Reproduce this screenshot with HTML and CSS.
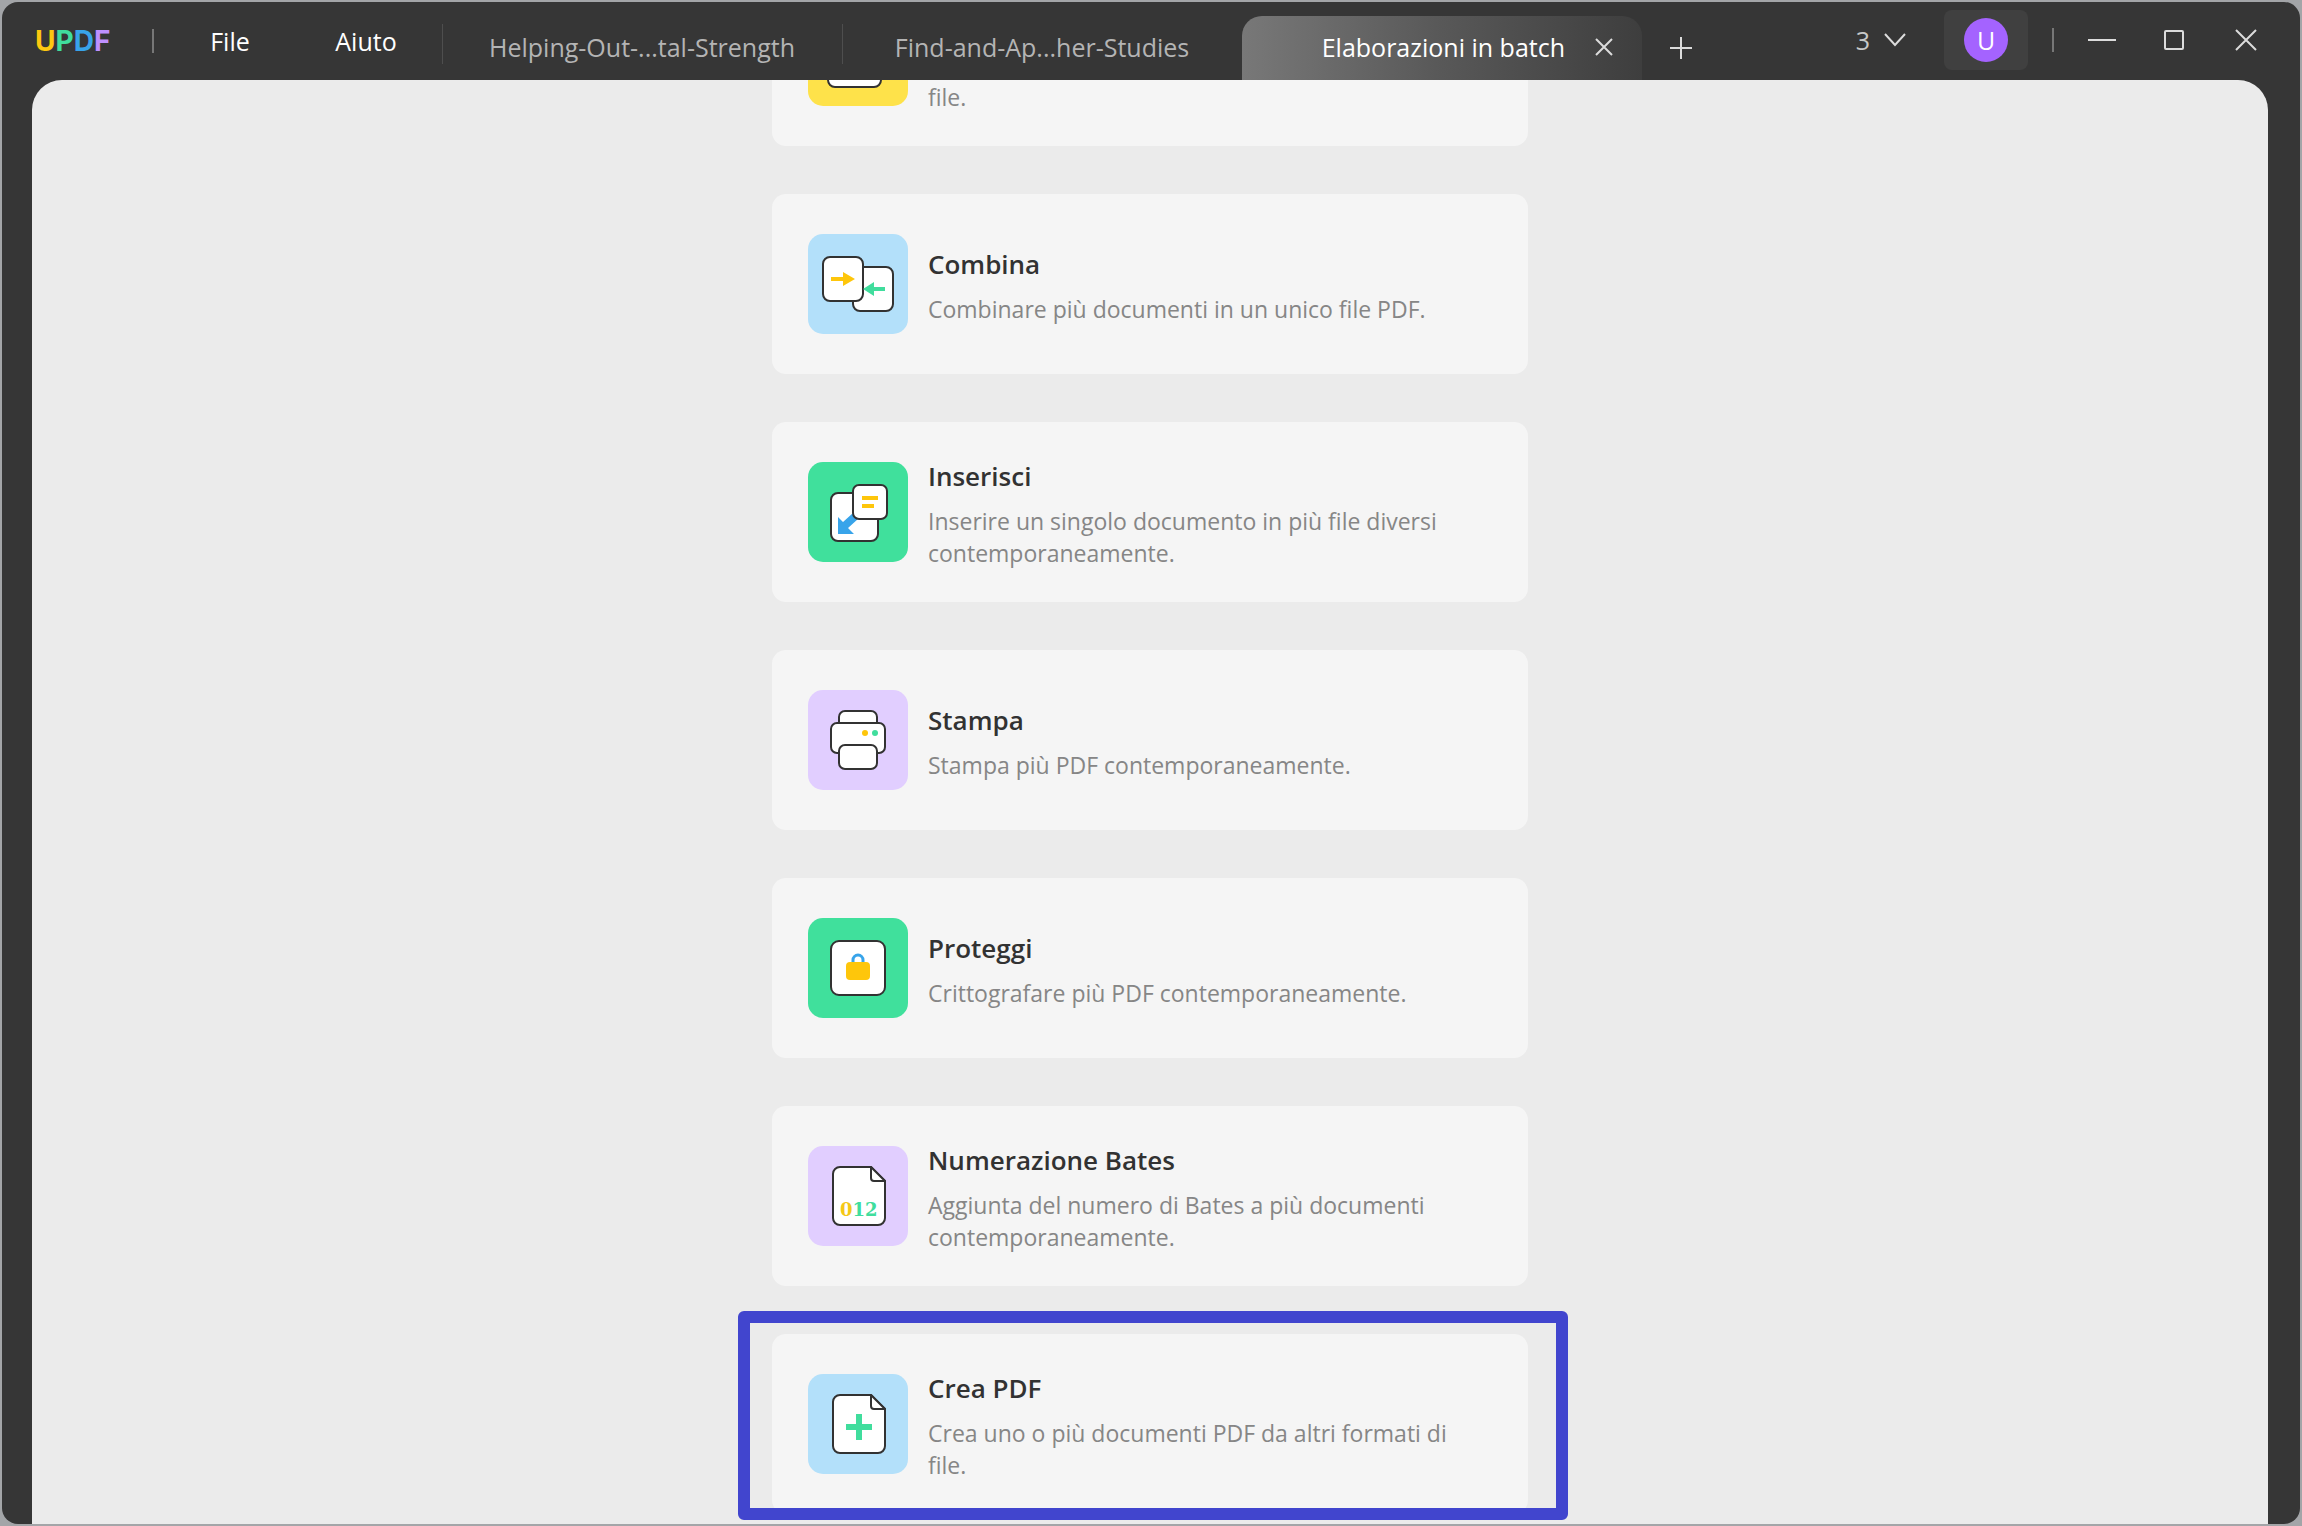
FILE: index.html
```html
<!DOCTYPE html>
<html lang="it">
<head>
<meta charset="utf-8">
<title>UPDF</title>
<link rel="stylesheet" href="styles.css">
</head>
<body>
<div class="window">
  <header class="titlebar">
    <div class="logo"><span class="logo-u">U</span><span class="logo-p">P</span><span class="logo-d">D</span><span class="logo-f">F</span></div>
    <span class="divider"></span>
    <nav class="menu">
      <button class="menu-item" type="button">File</button>
      <button class="menu-item" type="button">Aiuto</button>
    </nav>
    <div class="tabs">
      <button class="tab" type="button">Helping-Out-...tal-Strength</button>
      <button class="tab" type="button">Find-and-Ap...her-Studies</button>
      <div class="tab tab-active">
        <button class="tab-label" type="button">Elaborazioni in batch</button>
        <button class="tab-close" type="button" aria-label="Chiudi">
          <svg width="18" height="18" viewBox="0 0 18 18"><path class="glyph" d="M1 1l16 16M17 1L1 17"/></svg>
        </button>
      </div>
      <button class="tab-add" type="button" aria-label="Nuova scheda">
        <svg width="22" height="22" viewBox="0 0 22 22"><path class="glyph" d="M0 11h22M11 0v22"/></svg>
      </button>
    </div>
    <div class="controls">
      <button class="tab-count" type="button">3
        <svg width="22" height="14" viewBox="0 0 22 14"><path class="glyph" d="M1 1l10 11L21 1"/></svg>
      </button>
      <button class="account" type="button"><span class="avatar">U</span></button>
      <span class="divider"></span>
      <div class="window-buttons">
        <button class="window-button" type="button" aria-label="Riduci">
          <svg width="28" height="22" viewBox="0 0 28 22"><path class="glyph" d="M0 11h28"/></svg>
        </button>
        <button class="window-button" type="button" aria-label="Ingrandisci">
          <svg width="22" height="22" viewBox="0 0 22 22"><rect class="glyph" x="2" y="2" width="18" height="18" rx="1"/></svg>
        </button>
        <button class="window-button" type="button" aria-label="Chiudi finestra">
          <svg width="22" height="22" viewBox="0 0 22 22"><path class="glyph" d="M1 1l20 20M21 1L1 21"/></svg>
        </button>
      </div>
    </div>
  </header>

  <main class="panel">
    <div class="tools">
      <a class="card card-cut" href="#">
        <svg class="icon-cut" width="100" height="26" viewBox="0 74 100 26">
          <rect class="yellow" y="0" width="100" height="100" rx="15"/>
          <rect class="sheet" x="20" y="40" width="53" height="41" rx="7"/>
        </svg>
        <div class="text"><p>file.</p></div>
      </a>

      <a class="card" href="#">
        <svg class="icon" viewBox="0 0 100 100">
          <rect class="blue" width="100" height="100" rx="15"/>
          <rect class="sheet" x="45" y="33" width="40" height="44" rx="7"/>
          <rect class="sheet" x="15" y="23" width="40" height="44" rx="7"/>
          <path fill="#fec60b" d="M23 43h12v-5l12 7-12 7v-5H23z"/>
          <path fill="#40dd9d" d="M77 53H66v-5l-11 7 11 7v-5h11z"/>
        </svg>
        <div class="text"><h2>Combina</h2><p>Combinare più documenti in un unico file PDF.</p></div>
      </a>

      <a class="card" href="#">
        <svg class="icon" viewBox="0 0 100 100">
          <rect class="green" width="100" height="100" rx="15"/>
          <rect class="sheet" x="23" y="31" width="47" height="48" rx="7"/>
          <path fill="#38a4ea" d="M30 55l5 5 10-9 5 6-10 9 6 6H30z"/>
          <rect class="sheet" x="45" y="23" width="34" height="34" rx="6"/>
          <path fill="#fec60b" d="M54 34h16v4H54zM54 42h12v4H54z"/>
        </svg>
        <div class="text"><h2>Inserisci</h2><p>Inserire un singolo documento in più file diversi contemporaneamente.</p></div>
      </a>

      <a class="card" href="#">
        <svg class="icon" viewBox="0 0 100 100">
          <rect class="purple" width="100" height="100" rx="15"/>
          <rect class="sheet" x="31" y="21" width="38" height="30" rx="6"/>
          <rect class="sheet" x="23" y="33" width="54" height="30" rx="6"/>
          <rect class="sheet" x="31" y="55" width="38" height="24" rx="6"/>
          <circle cx="57" cy="43" r="3" fill="#fec60b"/>
          <circle cx="67" cy="43" r="3" fill="#40dd9d"/>
        </svg>
        <div class="text"><h2>Stampa</h2><p>Stampa più PDF contemporaneamente.</p></div>
      </a>

      <a class="card" href="#">
        <svg class="icon" viewBox="0 0 100 100">
          <rect class="green" width="100" height="100" rx="15"/>
          <rect class="sheet" x="23" y="23" width="54" height="54" rx="8"/>
          <path fill="none" stroke="#38a4ea" stroke-width="3" d="M45 46v-4a5 5 0 0 1 10 0v4"/>
          <rect x="38" y="44" width="24" height="18" rx="4" fill="#fec60b"/>
        </svg>
        <div class="text"><h2>Proteggi</h2><p>Crittografare più PDF contemporaneamente.</p></div>
      </a>

      <a class="card" href="#">
        <svg class="icon" viewBox="0 0 100 100">
          <rect class="purple" width="100" height="100" rx="15"/>
          <path class="sheet" d="M32 21h31l14 14v37a7 7 0 0 1-7 7H32a7 7 0 0 1-7-7V28a7 7 0 0 1 7-7z"/>
          <path class="sheet" d="M63 21v11a3 3 0 0 0 3 3h11z"/>
          <text class="digits" x="32" y="70"><tspan fill="#f5c816">0</tspan><tspan fill="#40dd9d">12</tspan></text>
        </svg>
        <div class="text"><h2>Numerazione Bates</h2><p>Aggiunta del numero di Bates a più documenti contemporaneamente.</p></div>
      </a>

      <a class="card card-marked" href="#">
        <svg class="icon" viewBox="0 0 100 100">
          <rect class="blue" width="100" height="100" rx="15"/>
          <path class="sheet" d="M32 21h31l14 14v37a7 7 0 0 1-7 7H32a7 7 0 0 1-7-7V28a7 7 0 0 1 7-7z"/>
          <path class="sheet" d="M63 21v11a3 3 0 0 0 3 3h11z"/>
          <path fill="#40dd9d" d="M48 40h6v10h10v6H54v10h-6V56H38v-6h10z"/>
        </svg>
        <div class="text"><h2>Crea PDF</h2><p>Crea uno o più documenti PDF da altri formati di file.</p></div>
        <span class="marker"></span>
      </a>
    </div>
  </main>
</div>
</body>
</html>
```
FILE: styles.css
```css
* {
  box-sizing: border-box;
}

body {
  margin: 0;
  height: 100vh;
  padding: 2px;
  overflow: hidden;
  background: #a3a5a8;
  font-family: "Open Sans", "Noto Sans", sans-serif;
}

button {
  border: 0;
  padding: 0;
  background: none;
  color: inherit;
  font: inherit;
}

svg {
  display: block;
  flex: none;
}

.glyph {
  fill: none;
  stroke: #dcdcdc;
  stroke-width: 2;
}

.window {
  display: flex;
  flex-direction: column;
  height: 100%;
  padding: 0 32px 0 30px;
  overflow: hidden;
  border-radius: 16px;
  background: #363636;
}

/* Title bar */

.titlebar {
  display: flex;
  align-items: center;
  flex: none;
  height: 78px;
  margin-right: -14px;
  color: #fff;
  font-size: 25px;
}

.logo {
  width: 120px;
  padding-left: 3px;
  font: 700 28px/32px Inter, sans-serif;
}

.logo-u { color: #fdc810; }
.logo-p { color: #40dd9d; }
.logo-d { color: #38a4ea; }
.logo-f { color: #bf90ff; }

.divider {
  width: 2px;
  height: 24px;
  background: #777;
}

.menu {
  display: flex;
  padding: 0 8px;
}

.menu-item {
  width: 136px;
}

.tabs {
  display: flex;
  align-self: flex-end;
}

.tab {
  display: flex;
  align-items: center;
  justify-content: center;
  width: 400px;
  height: 64px;
  padding-bottom: 2px;
  color: #b4b4b4;
  background: linear-gradient(#4e4e4e, #4e4e4e) 0 8px / 1px 40px no-repeat;
}

.tab-active {
  justify-content: flex-end;
  gap: 30px;
  padding-right: 29px;
  border-radius: 20px 20px 0 0;
  background: linear-gradient(90deg, #787878, #585858 50%, #3e3e3e);
  color: #fff;
}

.tab-add {
  display: flex;
  align-items: center;
  padding: 0 28px;
}

.controls {
  display: flex;
  align-items: center;
  margin-left: auto;
  padding-bottom: 2px;
}

.tab-count {
  display: flex;
  align-items: center;
  gap: 14px;
  margin-right: 38px;
  color: #c8c8c8;
}

.account {
  display: flex;
  align-items: center;
  justify-content: center;
  width: 84px;
  height: 60px;
  margin-right: 24px;
  border-radius: 8px;
  background: #404040;
}

.avatar {
  width: 44px;
  border-radius: 50%;
  background: #a463ff;
  line-height: 44px;
}

.window-buttons {
  display: flex;
  margin-left: 12px;
}

.window-button {
  display: flex;
  justify-content: center;
  width: 72px;
}

/* Tool list */

.panel {
  flex: 1;
  min-height: 0;
  overflow: hidden;
  border-radius: 30px 30px 0 0;
  background: #ebebeb;
}

.tools {
  display: flex;
  flex-direction: column;
  gap: 48px;
  max-width: 756px;
  margin: 0 auto;
}

.card {
  display: flex;
  align-items: center;
  gap: 20px;
  flex: none;
  min-height: 180px;
  padding: 0 36px;
  border-radius: 14px;
  background: #f5f5f5;
  color: #323232;
  text-decoration: none;
}

.icon {
  width: 100px;
  height: 100px;
}

.yellow { fill: #fee24a; }
.blue { fill: #b3e0fa; }
.green { fill: #40e09c; }
.purple { fill: #e1ceff; }

.sheet {
  fill: #fff;
  stroke: #323232;
  stroke-width: 2;
  stroke-linejoin: round;
}

.digits {
  font: 700 18px "DejaVu Serif", serif;
}

.text {
  max-width: 540px;
}

.text h2 {
  margin: 0 0 8px;
  font-size: 26px;
  font-weight: 600;
  line-height: 42px;
}

.text p {
  margin: 0;
  color: #868686;
  font-size: 23px;
  line-height: 32px;
}

.card-cut {
  align-items: flex-end;
  min-height: 66px;
  border-radius: 0 0 14px 14px;
}

.icon-cut {
  margin-bottom: 40px;
}

.card-cut .text {
  padding-bottom: 33px;
}

.card-marked {
  position: relative;
}

.marker {
  position: absolute;
  inset: -23px -40px -6px -34px;
  border: 12px solid #4145ce;
  border-radius: 6px;
}
```
